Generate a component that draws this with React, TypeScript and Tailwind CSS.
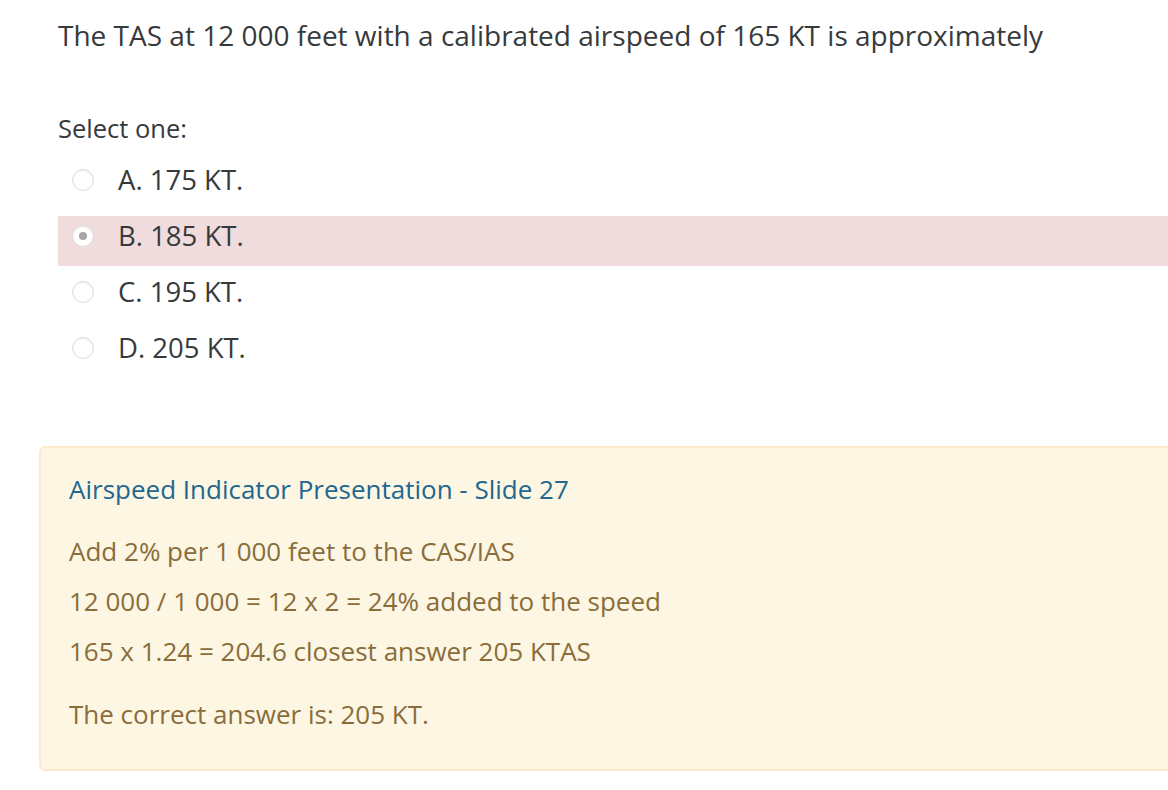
import React from "react";

type Option = {
  label: string;
  checked?: boolean;
};

const OPTIONS: Option[] = [
  { label: "A. 175 KT." },
  { label: "B. 185 KT.", checked: true },
  { label: "C. 195 KT." },
  { label: "D. 205 KT." },
];

const FEEDBACK_LINES = [
  "Add 2% per 1 000 feet to the CAS/IAS",
  "12 000 / 1 000 = 12 x 2 = 24% added to the speed",
  "165 x 1.24 = 204.6 closest answer 205 KTAS",
];

function Radio({ checked }: { checked?: boolean }) {
  return (
    <span className="flex h-[22px] w-[22px] shrink-0 items-center justify-center rounded-full border border-[#dcdcdc] bg-white shadow-[inset_0_1px_2px_rgba(0,0,0,0.08)]">
      {checked ? <span className="h-[8px] w-[8px] rounded-full bg-[#a5a5a5]" /> : null}
    </span>
  );
}

export default function App() {
  return (
    <div className="min-h-[790px] w-full overflow-hidden bg-white font-['Open_Sans',sans-serif]">
      <div className="w-[1200px] pl-[58px] pt-[17px]">
        <p className="text-[28px] leading-[36px] text-[#373a3c]">
          The TAS at 12 000 feet with a calibrated airspeed of 165 KT is approximately
        </p>

        <p className="mt-[57px] text-[25.5px] leading-[36px] text-[#373a3c]">Select one:</p>

        <div className="mt-[14px] flex flex-col gap-[6px]">
          {OPTIONS.map((option) => (
            <div
              key={option.label}
              className={`flex h-[50px] items-center pl-[14px] pb-[10px] ${
                option.checked ? "bg-[#f1dcdd]" : ""
              }`}
            >
              <Radio checked={option.checked} />
              <span className="ml-[24px] text-[27.5px] leading-[36px] text-[#373a3c]">
                {option.label}
              </span>
            </div>
          ))}
        </div>

        <div className="-ml-[19px] mt-[68px] h-[325px] rounded-[6px] border-2 border-[#faebcc] bg-[#fcf6e3] pl-[28px] pt-[23px]">
          <p className="text-[26px] leading-[36px] text-[#23668f]">
            Airspeed Indicator Presentation - Slide 27
          </p>
          <div className="mt-[19px]">
            {FEEDBACK_LINES.map((line) => (
              <p key={line} className="text-[26px] leading-[50px] text-[#8a6d3b]">
                {line}
              </p>
            ))}
          </div>
          <p className="mt-[20px] text-[26px] leading-[36px] text-[#8a6d3b]">
            The correct answer is: 205 KT.
          </p>
        </div>
      </div>
    </div>
  );
}
